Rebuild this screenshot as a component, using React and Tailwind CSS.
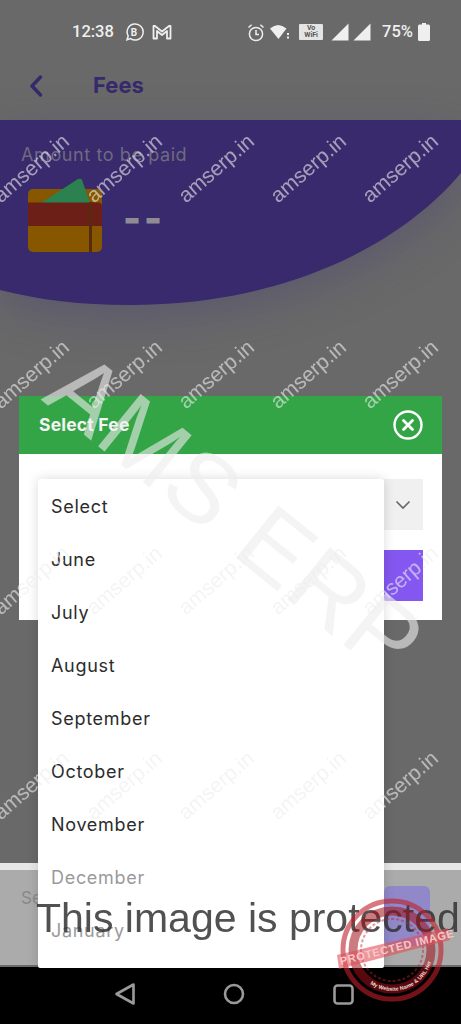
import React from 'react';

const months = ['Select', 'June', 'July', 'August', 'September', 'October', 'November', 'December', 'January'];
const markRows = [168, 374, 580, 785];
const markCols = [31, 124, 216, 308, 400];

function StatusBar() {
  return (
    <div className="relative flex h-[62px] items-center pt-[2px] text-[#efefef] font-['Roboto',sans-serif]">
      <span className="ml-[72px] text-[16.5px] font-medium">12:38</span>
      <svg className="ml-[10px]" width="20" height="20" viewBox="0 0 20 20" fill="none" stroke="#efefef" strokeWidth="1.5">
        <path d="M3 17.8 4.2 14A8 8 0 1 1 6.6 16.6Z" />
        <text x="10" y="13.5" fontSize="10" fontWeight="700" textAnchor="middle" fill="#efefef" stroke="none">B</text>
      </svg>
      <svg className="ml-[8px]" width="20" height="16" viewBox="0 0 20 16" fill="none" stroke="#efefef" strokeWidth="1.8" strokeLinejoin="round">
        <path d="M1.5 2v12.5h3.5V7l5 4 5-4v7.5h3.5V2H17l-7 5.5L3 2Z" />
      </svg>
      <div className="ml-auto mr-[31px] flex items-center">
        <svg width="18" height="19" viewBox="0 0 18 19" fill="none" stroke="#efefef" strokeWidth="1.5">
          <circle cx="9" cy="11" r="6.6" />
          <path d="M9 7v4.4h3M1.5 4.5 4.6 1.8M16.5 4.5l-3.1-2.7" />
        </svg>
        <svg className="ml-[5px]" width="22" height="16" viewBox="0 0 22 16" fill="#efefef">
          <path d="M0 4.5Q8-2.5 16.5 4.5L8.5 15Z" />
          <path d="M17 9h2v2h-2zM17 12.5h2v2h-2z" />
        </svg>
        <div className="ml-[7px] flex h-[16px] w-[24px] items-center justify-center rounded-[1px] bg-[#e4e4e4] text-center text-[7px] font-bold leading-[7px] text-[#555]">
          Vo<br />WiFi
        </div>
        <svg className="ml-[8px]" width="18" height="18" viewBox="0 0 18 18" fill="#efefef">
          <path d="M17.5 0.5V17.5H0.5Z" />
        </svg>
        <svg className="ml-[4px]" width="18" height="18" viewBox="0 0 18 18" fill="#efefef">
          <path d="M17.5 0.5V17.5H0.5Z" />
        </svg>
        <span className="ml-[11px] text-[16.5px] font-medium">75%</span>
        <svg className="ml-[5px]" width="12" height="18" viewBox="0 0 12 18" fill="#efefef">
          <path d="M4 0h4v1.5h2.5A1.5 1.5 0 0 1 12 3v13.5a1.5 1.5 0 0 1-1.5 1.5h-9A1.5 1.5 0 0 1 0 16.5V3a1.5 1.5 0 0 1 1.5-1.5H4Z" />
        </svg>
      </div>
    </div>
  );
}

function Wallet() {
  return (
    <svg className="ml-[28px]" width="74" height="74" viewBox="0 0 74 74">
      <rect x="0" y="11" width="74" height="63" rx="5" fill="#875700" />
      <path d="M13 25 50 1q3-1 4 1L62 25Z" fill="#2c8150" />
      <path d="M0 25.5Q0 24 2 24.5H70Q74 24.5 74 28V48H0Z" fill="#6b1f17" />
      <rect x="61" y="24" width="3" height="50" fill="#5a2a10" />
    </svg>
  );
}

function Banner() {
  return (
    <div className="relative h-[185px] shrink-0 font-['Inter',sans-serif]">
      <svg className="absolute inset-0 drop-shadow-[0_14px_22px_rgba(50,40,120,0.25)]" width="461" height="185" viewBox="0 0 461 185">
        <path d="M0 0H461V53C400 125 285 185 130 185 80 185 40 180 0 170Z" fill="#382a6c" />
      </svg>
      <div className="relative pt-[23px]">
        <p className="pl-[21px] text-[18px] leading-[24px] tracking-[0.6px] text-[#6f6a80]">Amount to be paid</p>
        <div className="mt-[11px] flex items-center">
          <Wallet />
          <span className="ml-[21px] mt-[6px] text-[38px] font-black leading-none tracking-[3px] text-[#8e8b96]">--</span>
        </div>
      </div>
    </div>
  );
}

function FeeModal() {
  return (
    <div className="absolute left-[19px] top-[396px] w-[423px] font-['Inter',sans-serif]">
      <div className="flex h-[58px] items-center justify-between bg-[#34a547] pl-[20px] pr-[19px]">
        <span className="text-[17.5px] font-bold tracking-[0.2px] text-[#f4f4f4]">Select Fee</span>
        <svg width="30" height="30" viewBox="0 0 30 30" fill="none" stroke="#fff">
          <circle cx="15" cy="15" r="13.5" strokeWidth="2.4" />
          <path d="M10.5 10.5l9 9M19.5 10.5l-9 9" strokeWidth="2.8" strokeLinecap="round" />
        </svg>
      </div>
      <div className="flex flex-col gap-[20px] bg-white px-[19px] pb-[19px] pt-[25px]">
        <div className="flex h-[51px] items-center justify-end bg-[#f0f0f0] pr-[12px]">
          <svg width="16" height="10" viewBox="0 0 16 10" fill="none" stroke="#666" strokeWidth="1.6">
            <path d="M1.5 1.5 8 8l6.5-6.5" />
          </svg>
        </div>
        <div className="h-[51px] bg-[#8458f0]" />
      </div>
    </div>
  );
}

function MonthMenu() {
  return (
    <div className="absolute left-[38px] top-[479px] w-[346px] rounded-[2px] bg-white pb-[11px] pt-[1px] shadow-[0_0_12px_rgba(0,0,0,0.15)] font-['Inter',sans-serif]">
      {months.map((month, i) => (
        <div
          key={month}
          className={`flex h-[53px] items-center pl-[13px] text-[18px] tracking-[0.7px] ${i > 6 ? 'text-[#9a9a9a]' : 'text-[#2c2c2c]'}`}
        >
          {month}
        </div>
      ))}
    </div>
  );
}

function BottomBar() {
  return (
    <div className="mt-auto shrink-0">
      <div className="h-[7px] bg-[#e6e6e6]" />
      <div className="flex h-[95px] justify-between bg-[#ababab] pl-[21px] pr-[31px] pt-[16px] font-['Inter',sans-serif]">
        <span className="text-[17px] text-[#8a8a8a]">Select</span>
        <div className="h-[60px] w-[46px] rounded-[6px] bg-[#9088c8]" />
      </div>
      <div className="h-[2px] bg-[#6a6a6a]" />
    </div>
  );
}

function NavBar() {
  return (
    <div className="flex h-[57px] shrink-0 items-center bg-black pb-[3px] pl-[114px]">
      <svg width="22" height="24" viewBox="0 0 22 24" fill="none" stroke="#9a9a9a" strokeWidth="2.6" strokeLinejoin="round">
        <path d="M19.5 2.5V21.5L2.5 12Z" />
      </svg>
      <svg className="ml-[87px]" width="22" height="22" viewBox="0 0 22 22" fill="none" stroke="#9a9a9a" strokeWidth="2.6">
        <circle cx="11" cy="11" r="9" />
      </svg>
      <svg className="ml-[88px]" width="21" height="21" viewBox="0 0 21 21" fill="none" stroke="#9a9a9a" strokeWidth="2.6">
        <rect x="1.5" y="1.5" width="18" height="18" rx="3" />
      </svg>
    </div>
  );
}

function Watermarks() {
  return (
    <div className="pointer-events-none absolute inset-0 overflow-hidden font-['Liberation_Sans',sans-serif]">
      {markRows.flatMap((y) =>
        markCols.map((x) => (
          <span
            key={`${x}-${y}`}
            className="absolute -translate-x-1/2 -translate-y-1/2 -rotate-[41deg] whitespace-nowrap text-[21px] text-[#eeeeee] opacity-60"
            style={{ left: x, top: y }}
          >
            amserp.in
          </span>
        ))
      )}
      <span className="absolute left-[236px] top-[514px] -translate-x-1/2 -translate-y-1/2 rotate-[39deg] whitespace-nowrap text-[98px] leading-none tracking-[1px] text-[#eeeeee] opacity-60">
        AMS ERP
      </span>
    </div>
  );
}

function Stamp() {
  return (
    <svg className="pointer-events-none absolute left-[332px] top-[896px]" width="124" height="110" viewBox="0 0 124 110" fill="none">
      <defs>
        <path id="stamp-arc" d="M38 88A40 40 0 0 0 99 66" />
      </defs>
      <circle cx="60" cy="54" r="49" stroke="#c0202a" strokeWidth="5" opacity="0.6" />
      <circle cx="60" cy="54" r="39" stroke="#a01018" strokeWidth="9" opacity="0.55" />
      <circle cx="60" cy="54" r="31" stroke="#c0202a" strokeWidth="2" strokeDasharray="3 2" opacity="0.45" />
      <path d="M5 59 116 32 118 44 7 73Z" fill="#e0505a" opacity="0.6" />
      <text x="9" y="69" transform="rotate(-14 9 69)" fontSize="11" fontWeight="700" letterSpacing="0.7" fill="#f7c8c8" fontFamily="'Liberation Sans', sans-serif">
        PROTECTED IMAGE
      </text>
      <text fontSize="5.5" fontWeight="700" fill="#f2d8d8" fontFamily="'Liberation Sans', sans-serif">
        <textPath href="#stamp-arc">My Website Name &amp; URL Here</textPath>
      </text>
    </svg>
  );
}

export default function App() {
  return (
    <div className="relative flex h-[1024px] w-[461px] flex-col overflow-hidden bg-[#696969]">
      <StatusBar />
      <div className="flex h-[58px] shrink-0 items-center pb-[11px] pl-[29px] font-['Inter',sans-serif]">
        <svg width="14" height="22" viewBox="0 0 14 22" fill="none" stroke="#362a6c" strokeWidth="3.4" strokeLinecap="round" strokeLinejoin="round">
          <path d="M11.5 2 3 11l8.5 9" />
        </svg>
        <span className="ml-[50px] text-[22px] font-bold text-[#362a6c]">Fees</span>
      </div>
      <Banner />
      <BottomBar />
      <NavBar />
      <FeeModal />
      <MonthMenu />
      <Watermarks />
      <span className="absolute left-[36px] top-[894px] whitespace-nowrap font-['Liberation_Sans',sans-serif] text-[41px] leading-[48px] text-[#333] opacity-85">
        This image is protected
      </span>
      <Stamp />
    </div>
  );
}
